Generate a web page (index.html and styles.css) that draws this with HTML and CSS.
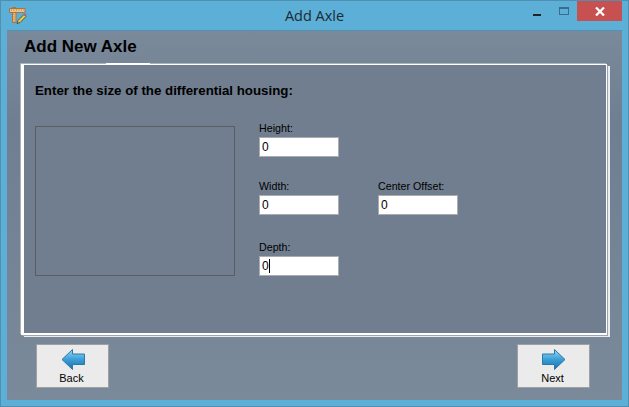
FILE: index.html
```html
<!DOCTYPE html>
<html lang="en">
<head>
  <meta charset="UTF-8" />
  <title>Add Axle</title>
  <link rel="stylesheet" href="styles.css">
</head>
<body>
  <div class="window">
    <div class="titlebar">
      <svg class="app-icon" width="18" height="18" viewBox="0 0 18 18">
        <path d="M3.5 .5h3.5v15H3.500z" fill="#e6b67c" stroke="#a8743c" stroke-width="1"/>
        <path d="M.5 1.500h15.500v4H.5z" fill="#edc48e" stroke="#a8743c" stroke-width="1"/>
        <path d="M2 3h13" stroke="#a8743c" stroke-width="1" stroke-dasharray="1 1.500"/>
        <path d="M5 7v8" stroke="#c08c50" stroke-width="1" stroke-dasharray="1 1.500"/>
        <path d="M8 16.500l1-3 6-6 2 2-6 6z" fill="#f0d040" stroke="#3a3a3a" stroke-width=".8"/>
        <path d="M15 7.500l1-1 1.500 1.500-1 1z" fill="#e04070"/>
      </svg>
      <div class="title">Add Axle</div>
      <div class="controls">
        <div class="ctl"><span class="min-glyph"></span></div>
        <div class="ctl"><span class="max-glyph"></span></div>
        <div class="close">
          <svg width="10" height="9" viewBox="0 0 10 9"><path d="M1 .5l8 8M9 .5l-8 8" stroke="#fff" stroke-width="2.200"/></svg>
        </div>
      </div>
    </div>
    <div class="client">
      <h1 class="heading">Add New Axle</h1>
      <div class="tab-mark"></div>
      <div class="panel">
        <p class="prompt">Enter the size of the differential housing:</p>
        <div class="form-row">
          <div class="preview"></div>
          <div class="fields">
            <div class="field f-height"><label>Height:</label><div class="input">0</div></div>
            <div class="field f-width"><label>Width:</label><div class="input">0</div></div>
            <div class="field f-offset"><label>Center Offset:</label><div class="input">0</div></div>
            <div class="field f-depth"><label>Depth:</label><div class="input">0<span class="caret"></span></div></div>
          </div>
        </div>
      </div>
      <div class="nav">
        <button class="nav-btn">
          <svg width="24" height="21" viewBox="0 0 24 21"><defs><linearGradient id="arrowBack" x1="0" y1="0" x2="0" y2="1"><stop offset="0" stop-color="#9ad6f2"/><stop offset=".5" stop-color="#3a9fd8"/><stop offset="1" stop-color="#1c6ea8"/></linearGradient></defs><path d="M1 10.500L11.500 .5v4.500h12v10.500h-12v5z" fill="url(#arrowBack)" stroke="#2a7aa8" stroke-width="1"/></svg>
          <span>Back</span>
        </button>
        <button class="nav-btn">
          <svg width="24" height="21" viewBox="0 0 24 21"><defs><linearGradient id="arrowNext" x1="0" y1="0" x2="0" y2="1"><stop offset="0" stop-color="#9ad6f2"/><stop offset=".5" stop-color="#3a9fd8"/><stop offset="1" stop-color="#1c6ea8"/></linearGradient></defs><path d="M23 10.500L12.500 .5v4.500H.5v10.500h12v5z" fill="url(#arrowNext)" stroke="#2a7aa8" stroke-width="1"/></svg>
          <span>Next</span>
        </button>
      </div>
    </div>
  </div>
</body>
</html>
```

FILE: styles.css
```css
* { margin: 0; padding: 0; box-sizing: border-box; }
html, body {
  width: 629px;
  height: 407px;
  overflow: hidden;
  font-family: 'Liberation Sans', sans-serif;
  background-color: #5cafd6;
}
.window {
  width: 629px;
  height: 407px;
  display: flex;
  flex-direction: column;
  border: 1px solid #4f8fb0;
  padding: 0 6px 6px;
}
.titlebar {
  height: 29px;
  display: flex;
  align-items: flex-start;
  position: relative;
}
.app-icon { margin: 6px 0 0 2px; }
.title {
  position: absolute;
  left: 0;
  right: 0;
  top: 5px;
  text-align: center;
  font-family: 'Open Sans', sans-serif;
  font-size: 14.5px;
  line-height: 20px;
  color: #1f2a33;
}
.controls {
  margin-left: auto;
  display: flex;
  position: relative;
}
.ctl {
  width: 27px;
  height: 20px;
  display: flex;
  align-items: center;
  justify-content: center;
}
.min-glyph {
  width: 8px;
  height: 2px;
  margin-top: 7px;
  background: #222;
}
.max-glyph {
  width: 10px;
  height: 8px;
  margin-top: 0;
  border: 1px solid #3d6c88;
  border-top-width: 2px;
}
.close {
  width: 45px;
  height: 20px;
  background: #c75050;
  display: flex;
  align-items: center;
  justify-content: center;
}
.client {
  flex: 1;
  display: flex;
  flex-direction: column;
  border-top: 1px solid #4f93b5;
  background: linear-gradient(#7a8a9b, #6f7e90 25%, #7a8a9b);
  padding: 5px 13px 0 14px;
}
.heading {
  font-size: 17px;
  line-height: 22px;
  font-weight: bold;
  color: #000;
  margin-left: 3px;
  height: 28px;
}
.tab-mark {
  position: absolute;
  left: 106px;
  top: 63px;
  width: 44px;
  height: 1px;
  background: #fff;
}
.panel {
  width: 586px;
  height: 271px;
  border-style: solid;
  border-color: #fff;
  border-width: 1px 1px 2px 3px;
  box-shadow: -1px -1px 0 #aab2ba, 1px 1px 0 #9aa5b0, 3px 2px 0 #ececec;
  background: #707e8f;
  padding: 0 11px;
}
.prompt {
  font-size: 13.3px;
  font-weight: bold;
  line-height: 14px;
  color: #000;
  margin-top: 19px;
}
.form-row {
  display: flex;
  margin-top: 27px;
}
.preview {
  width: 200px;
  height: 150px;
  border: 1px solid #5a5e62;
  margin-top: 1px;
}
.fields {
  margin-left: 24px;
  display: grid;
  grid-template-columns: 80px 80px;
  column-gap: 39px;
  grid-template-rows: 58px 61px auto;
  margin-top: -4px;
}
.field label {
  display: block;
  font-size: 10.7px;
  line-height: 13px;
  color: #000;
  height: 16px;
  padding-top: 1px;
}
.f-height { grid-column: 1; grid-row: 1; }
.f-width { grid-column: 1; grid-row: 2; }
.f-offset { grid-column: 2; grid-row: 2; }
.f-depth { grid-column: 1; grid-row: 3; }
.input {
  width: 80px;
  height: 20px;
  background: #fff;
  border: 1px solid #a9adb2;
  font-size: 12px;
  line-height: 18px;
  padding-left: 2px;
  color: #000;
  display: flex;
  align-items: center;
}
.caret {
  width: 1px;
  height: 14px;
  background: #000;
}
.nav {
  display: flex;
  justify-content: space-between;
  margin-top: 9px;
  padding: 0 19px 0 15px;
}
.nav-btn {
  width: 73px;
  height: 44px;
  background: #ebebeb;
  border: 1px solid #a0a0a0;
  display: flex;
  flex-direction: column;
  align-items: center;
  font-family: 'Liberation Sans', sans-serif;
  font-size: 11px;
  line-height: 13px;
  color: #000;
  padding-top: 4px;
}
.nav-btn span { margin: 2px 2px 0 0; }
```
